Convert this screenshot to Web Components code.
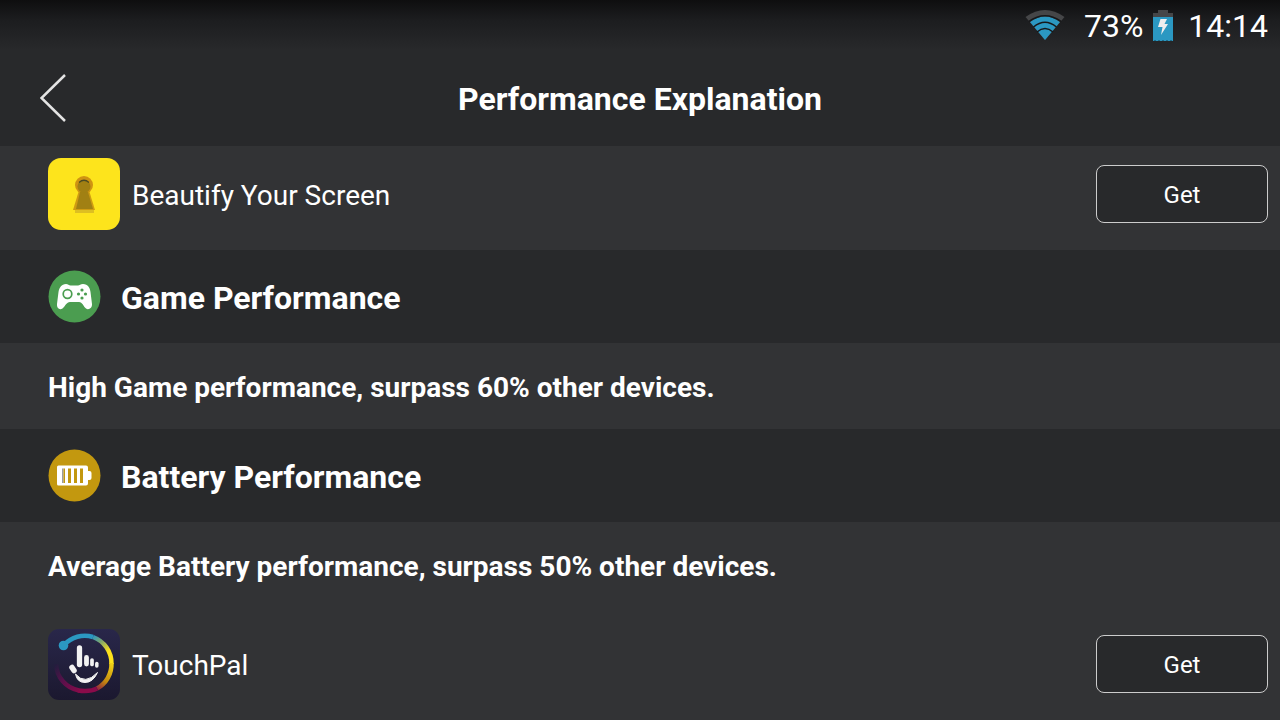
<!DOCTYPE html>
<html lang="en">
<head>
<meta charset="utf-8">
<meta name="viewport" content="width=device-width, initial-scale=1">
<title>Performance Explanation</title>
<style>
:root { --bar: #28292b; --row: #323335; --gutter: 48px; }
body { margin: 0; min-height: 100vh; background: var(--row); color: #fff; font-family: Roboto, "Noto Sans", sans-serif; }
</style>
</head>
<body>
<performance-page></performance-page>
<script>
const define = (name, html) => {
  const template = document.createElement('template');
  template.innerHTML = html;
  customElements.define(name, class extends HTMLElement {
    constructor() {
      super();
      this.attachShadow({ mode: 'open' }).append(template.content.cloneNode(true));
    }
  });
};

define('wifi-icon', `
<style>:host{display:block} svg{display:block}</style>
<svg width="40" height="32" viewBox="0 0 40 32" aria-hidden="true">
  <path d="M20 31 0.5 8Q20-6 39.5 8Z" fill="#454648"/>
  <path d="M20 31 5 13Q20 2 35 13Z" fill="#2b98c2"/>
  <g fill="none" stroke="#17181a" stroke-width="1.600">
    <path d="M4 12.500Q20 1 36 12.500"/>
    <path d="M8.500 18Q20 8.500 31.500 18"/>
    <path d="M12 23Q20 16 28 23"/>
  </g>
</svg>`);

define('charge-icon', `
<style>:host{display:block} svg{display:block}</style>
<svg width="20" height="31" viewBox="0 0 20 31" aria-hidden="true">
  <path d="M5 0h10v3h5v5H0V3h5z" fill="#454648"/>
  <path d="M0 7h20v24H0z" fill="#2b98c2"/>
  <path d="M7.500 9H14l-2.500 5H15L8 25l1.500-8H5z" fill="#eee"/>
  <path d="M1 30.500h18" stroke="#1d6c8a" stroke-dasharray="2 2"/>
</svg>`);

define('status-bar', `
<style>
:host{display:flex;align-items:center;justify-content:flex-end;height:50px;padding:0 12px;background:linear-gradient(#0e0e0f,#1c1d1f 40%,var(--bar));font-size:32px;line-height:40px;box-sizing:border-box}
wifi-icon{margin-right:19px}
span,time{padding-top:2px}
charge-icon{margin:0 15px 0 10px}
</style>
<wifi-icon></wifi-icon><span>73%</span><charge-icon></charge-icon><time>14:14</time>`);

define('title-bar', `
<style>
:host{display:grid;grid-template-columns:1fr auto 1fr;align-items:center;height:96px;background:var(--bar)}
button{justify-self:start;border:0;background:none;padding:0 40px;margin:0;color:inherit}
svg{display:block}
h1{margin:0;padding-top:2px;font-size:32px;line-height:40px;font-weight:700}
</style>
<button type="button" aria-label="Back"><svg width="26" height="48" viewBox="0 0 26 48"><path d="M25 1 1.500 24 25 47" fill="none" stroke="#e4e4e4" stroke-width="2.500"/></svg></button>
<h1><slot></slot></h1>`);

define('section-heading', `
<style>
:host{display:flex;align-items:center;gap:20px;height:93px;padding:0 var(--gutter);background:var(--bar)}
h2{margin:0;padding-top:2px;font-size:32px;line-height:40px;font-weight:700}
</style>
<slot name="icon"></slot><h2><slot></slot></h2>`);

define('score-note', `
<style>
:host{display:block;padding:27px var(--gutter) 23px;background:var(--row)}
p{margin:0;font-size:28px;line-height:36px;font-weight:700}
</style>
<p><slot></slot></p>`);

define('app-row', `
<style>
:host{display:flex;align-items:center;padding:20px 12px 20px var(--gutter);background:var(--row)}
span{flex:1;padding:4px 12px 0;font-size:28px;line-height:36px}
button{width:172px;height:58px;padding:2px 0 0;border:1px solid #ccc;border-radius:8px;background:var(--bar);color:inherit;font:24px/32px Roboto,"Noto Sans",sans-serif}
</style>
<slot name="icon"></slot><span><slot></slot></span><button type="button">Get</button>`);

define('keyhole-icon', `
<style>:host{display:block} svg{display:block}</style>
<svg width="72" height="72" viewBox="0 0 72 72" aria-hidden="true">
  <rect width="72" height="72" rx="13" fill="#fde41c"/>
  <path d="M27 52h19v3H27z" fill="#ddbf22"/>
  <path d="M30.500 34 25 52h22l-5.500-18z" fill="#cf9b12"/>
  <circle cx="36" cy="27" r="9" fill="#cf9312"/>
  <path d="M32 34h8l5 17H28z" fill="#a18013"/>
  <circle cx="36" cy="28.500" r="6.500" fill="#a18013"/>
  <path d="M31 24.500q5-4.500 10 0" fill="none" stroke="#4b4a22" stroke-width="1.200"/>
</svg>`);

define('game-icon', `
<style>:host{display:block} svg{display:block}</style>
<svg width="53" height="53" viewBox="0 0 53 53" aria-hidden="true">
  <circle cx="26.500" cy="26.500" r="26" fill="#4b9d50"/>
  <path d="M18 14c2 0 3 1.500 4.500 1.500h7.500c1.500 0 2.500-1.500 5-1.500 5 0 7 4 7.500 8L44 34c.4 4-3.500 6.500-6 4.500C35 36 34.500 32 31 32h-9c-3.500 0-4.500 4-7.500 6.500C11.500 40.500 8.600 38 9 34l1.500-12c.5-4 3-8 7.500-8z" fill="#fff"/>
  <circle cx="19.500" cy="24" r="4.300" fill="none" stroke="#4b9d50" stroke-width="1.700"/>
  <g fill="#4b9d50"><circle cx="34" cy="20" r="1.600"/><circle cx="34" cy="28" r="1.600"/><circle cx="30.500" cy="24" r="1.600"/><circle cx="37.500" cy="24" r="1.600"/></g>
</svg>`);

define('battery-icon', `
<style>:host{display:block} svg{display:block}</style>
<svg width="53" height="53" viewBox="0 0 53 53" aria-hidden="true">
  <circle cx="26.500" cy="26.500" r="26" fill="#c3980f"/>
  <path d="M10.500 16.500H38q2 0 2 2V22h1.500q2 0 2 2v5q0 2-2 2H40v3.500q0 2-2 2H10.500q-1.500 0-1.500-1.500V18q0-1.500 1.500-1.500z" fill="#fff"/>
  <path d="M14 19.500h1.500V34H14z" fill="#9c9ca0"/>
  <path d="M15.500 19.500H17V34h-1.500zM20 19.500h3V34h-3zM26 19.500h3V34h-3zM32 19.500h3V34h-3z" fill="#c3980f"/>
</svg>`);

define('touchpal-icon', `
<style>:host{display:block} svg{display:block}</style>
<svg width="72" height="72" viewBox="0 0 72 72" aria-hidden="true">
  <defs>
    <linearGradient id="bg" x2="0" y2="1"><stop stop-color="#29274a"/><stop offset="1" stop-color="#1b182f"/></linearGradient>
    <linearGradient id="a" gradientUnits="userSpaceOnUse" x1="45" y1="8" x2="63" y2="28"><stop stop-color="#2b98c2"/><stop offset=".35" stop-color="#7fa56c"/><stop offset=".8" stop-color="#fde01c"/></linearGradient>
    <linearGradient id="b" gradientUnits="userSpaceOnUse" x1="64" y1="36" x2="48" y2="62"><stop stop-color="#f0cf18"/><stop offset=".6" stop-color="#c3890f"/><stop offset="1" stop-color="#8a1a42"/></linearGradient>
    <linearGradient id="c" gradientUnits="userSpaceOnUse" x1="34" y1="63" x2="7" y2="38"><stop stop-color="#8a0b4a"/><stop offset=".55" stop-color="#5b104b"/><stop offset="1" stop-color="#241d3e"/></linearGradient>
  </defs>
  <rect y="1" width="72" height="71" rx="11" fill="url(#bg)"/>
  <g fill="none" stroke-width="4.500">
    <path d="M16 17A28 28 0 0 1 45 9" stroke="#2b98c2"/>
    <path d="M45 9A28 28 0 0 1 63.500 36" stroke="url(#a)"/>
    <path d="M63.500 35A28 28 0 0 1 49 60.500" stroke="url(#b)"/>
    <path d="M49 60.500Q42 64 30 62.400" stroke="#8a0b4a"/>
    <path d="M31 62.500A28 28 0 0 1 8 36" stroke="url(#c)"/>
  </g>
  <circle cx="15.500" cy="17.500" r="4.800" fill="#2b98c2"/>
  <g fill="none" stroke="#f2f2f2" stroke-linecap="round">
    <path d="M31.500 20v16.500" stroke-width="5.300"/>
    <path d="M38.500 29.500v6.500" stroke-width="4.800"/>
    <path d="M44 32v4.500" stroke-width="3.700"/>
    <path d="M48.800 35.500v2.500" stroke-width="3.500"/>
    <path d="M24 39.500l2 3" stroke-width="5.500"/>
  </g>
  <path d="M27.500 46q9.500 11.500 22-1.500-4.500 10-12.500 10t-9.500-8.500z" fill="#f2f2f2" stroke="#f2f2f2"/>
</svg>`);

define('performance-page', `
<style>
:host{display:block}
.first{padding-top:12px}
keyhole-icon,game-icon,battery-icon,touchpal-icon{flex:none}
</style>
<header><status-bar></status-bar><title-bar>Performance Explanation</title-bar></header>
<main>
  <app-row class="first"><keyhole-icon slot="icon"></keyhole-icon>Beautify Your Screen</app-row>
  <section-heading><game-icon slot="icon"></game-icon>Game Performance</section-heading>
  <score-note>High Game performance, surpass 60% other devices.</score-note>
  <section-heading><battery-icon slot="icon"></battery-icon>Battery Performance</section-heading>
  <score-note>Average Battery performance, surpass 50% other devices.</score-note>
  <app-row><touchpal-icon slot="icon"></touchpal-icon>TouchPal</app-row>
</main>`);
</script>
</body>
</html>
